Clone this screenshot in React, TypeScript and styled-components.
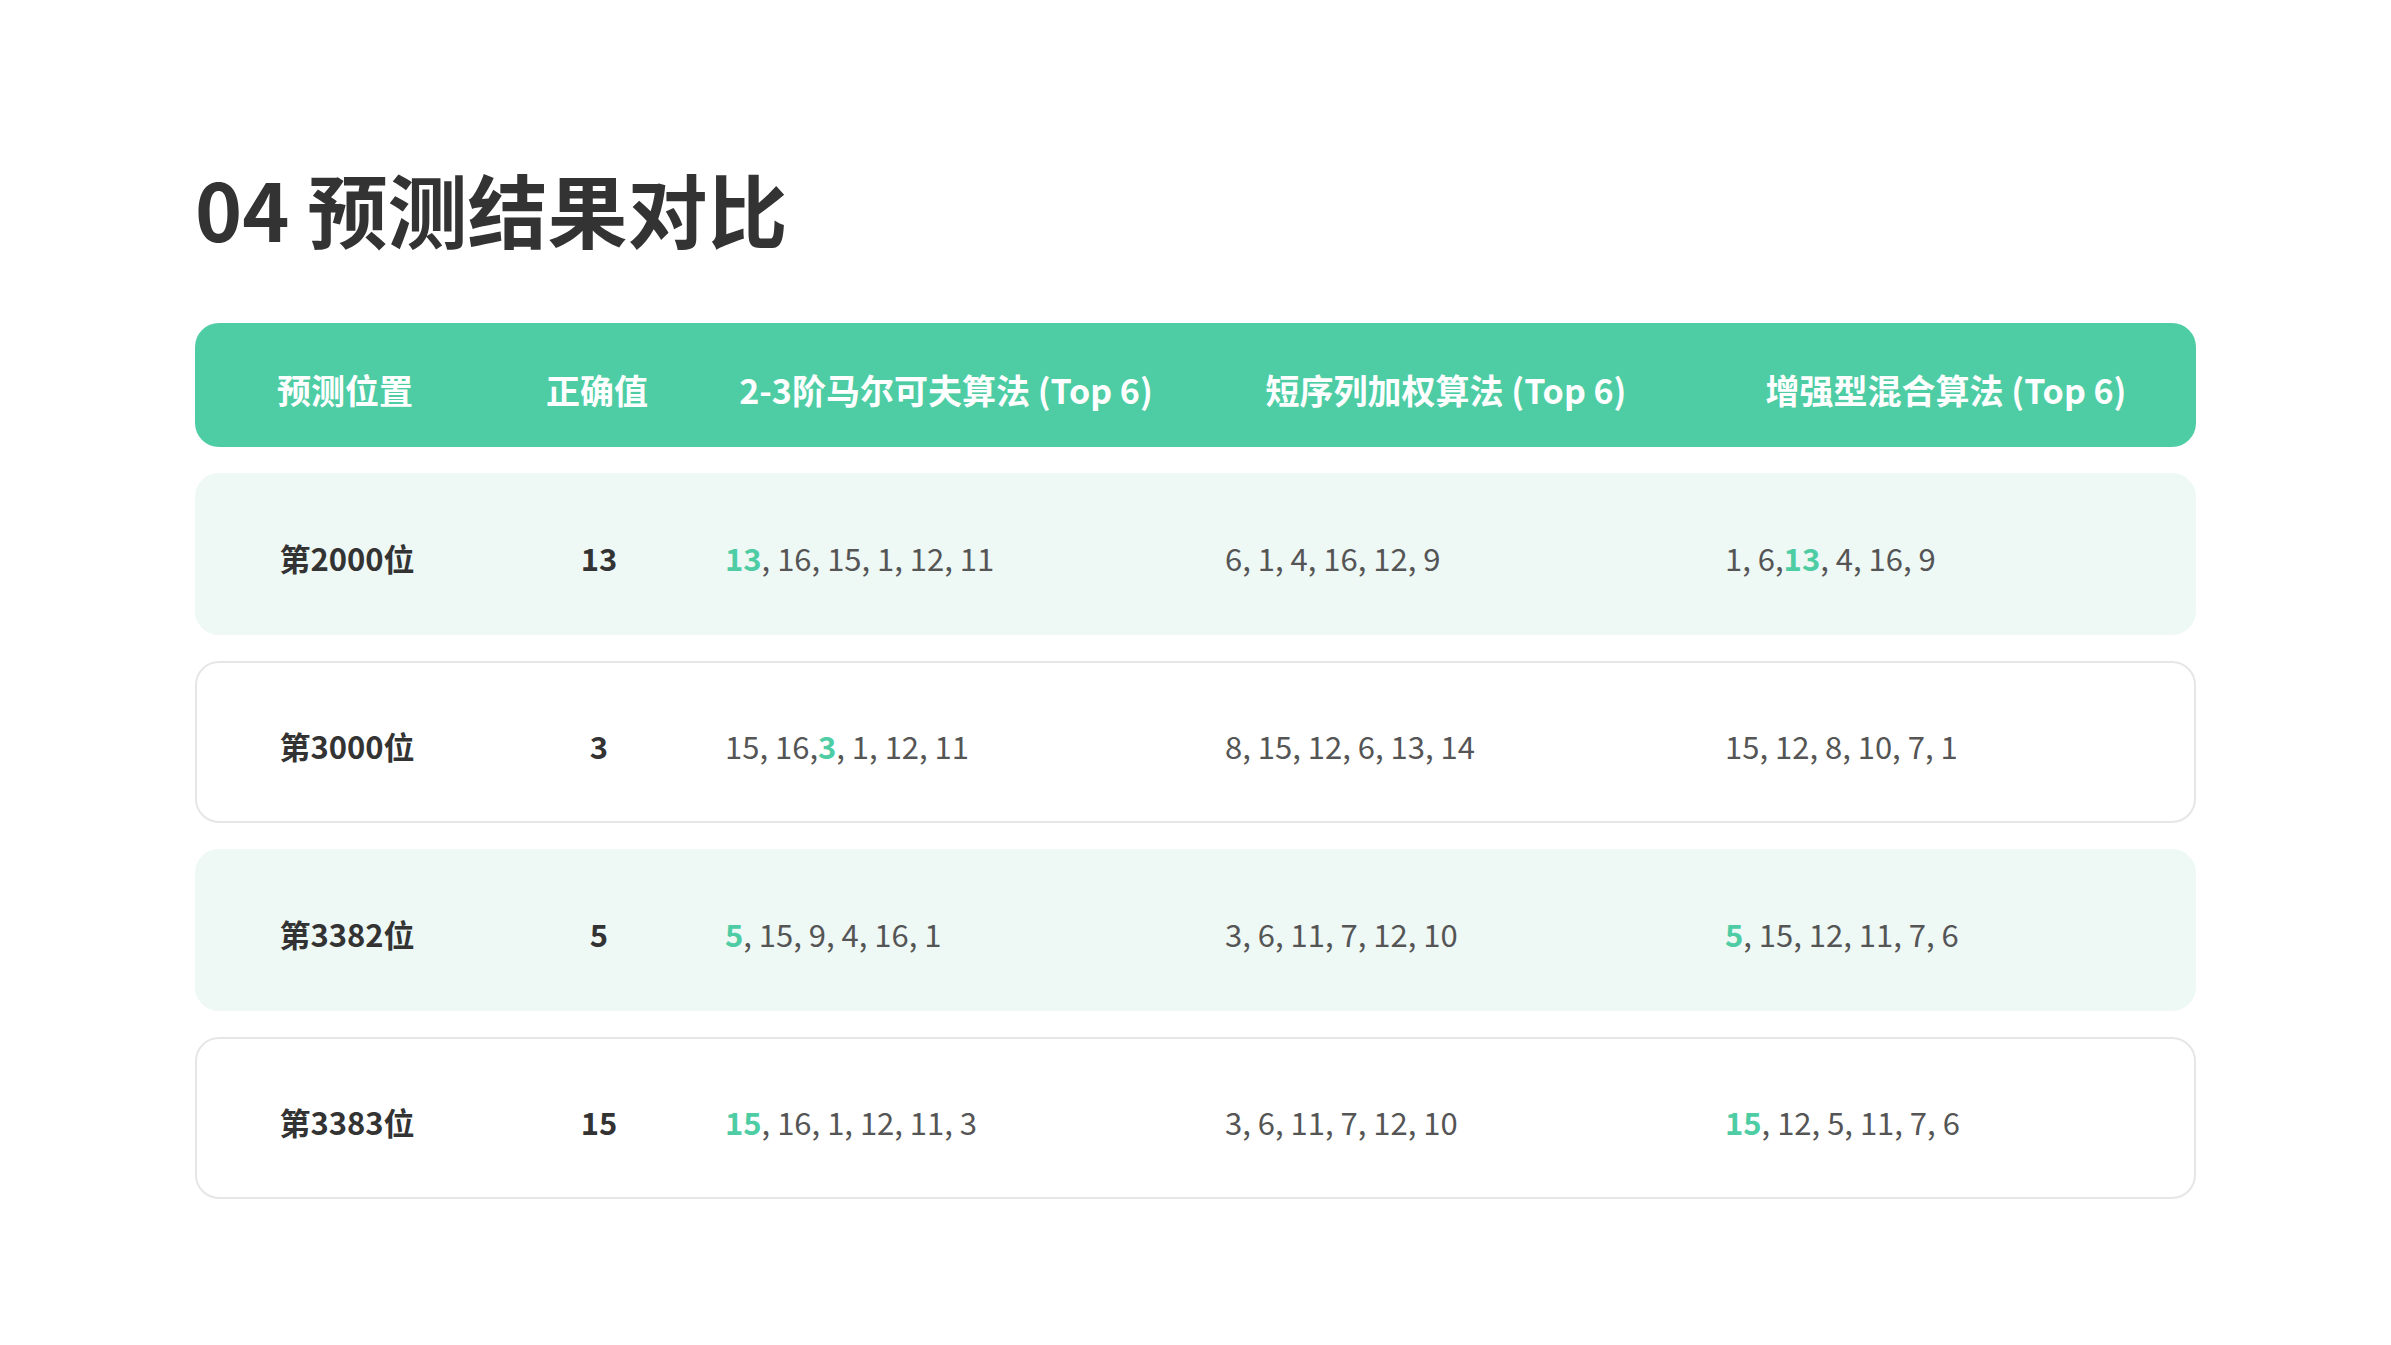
import styled, { createGlobalStyle } from "styled-components";

const GlobalStyle = createGlobalStyle`
  html, body {
    margin: 0;
    padding: 0;
    background: #ffffff;
  }
  body {
    font-family: "Noto Sans CJK SC", "Noto Sans", sans-serif;
    color: #333333;
  }
`;

type Cell = { text: string; hit?: boolean };

const rows: { pos: string; answer: string; markov: Cell[]; short: Cell[]; mixed: Cell[] }[] = [
  {
    pos: "第2000位",
    answer: "13",
    markov: [{ text: "13", hit: true }, { text: ", 16, 15, 1, 12, 11" }],
    short: [{ text: "6, 1, 4, 16, 12, 9" }],
    mixed: [{ text: "1, 6," }, { text: "13", hit: true }, { text: ", 4, 16, 9" }],
  },
  {
    pos: "第3000位",
    answer: "3",
    markov: [{ text: "15, 16," }, { text: "3", hit: true }, { text: ", 1, 12, 11" }],
    short: [{ text: "8, 15, 12, 6, 13, 14" }],
    mixed: [{ text: "15, 12, 8, 10, 7, 1" }],
  },
  {
    pos: "第3382位",
    answer: "5",
    markov: [{ text: "5", hit: true }, { text: ", 15, 9, 4, 16, 1" }],
    short: [{ text: "3, 6, 11, 7, 12, 10" }],
    mixed: [{ text: "5", hit: true }, { text: ", 15, 12, 11, 7, 6" }],
  },
  {
    pos: "第3383位",
    answer: "15",
    markov: [{ text: "15", hit: true }, { text: ", 16, 1, 12, 11, 3" }],
    short: [{ text: "3, 6, 11, 7, 12, 10" }],
    mixed: [{ text: "15", hit: true }, { text: ", 12, 5, 11, 7, 6" }],
  },
];

const headers = [
  "预测位置",
  "正确值",
  "2-3阶马尔可夫算法 (Top 6)",
  "短序列加权算法 (Top 6)",
  "增强型混合算法 (Top 6)",
];

const Page = styled.div`
  width: 2391px;
  height: 1345px;
  box-sizing: border-box;
  padding: 167px 195px 0;
`;

const Title = styled.h1`
  margin: 0 0 76px;
  font-size: 80px;
  line-height: 80px;
  font-weight: 700;
  color: #333333;
  letter-spacing: 0;
`;

const Table = styled.div`
  display: flex;
  flex-direction: column;
  gap: 26px;
`;

const grid = `
  display: grid;
  grid-template-columns: 252px 144px 446px 446px 446px;
  column-gap: 54px;
  padding: 0 26px 0 24px;
  align-items: center;
  box-sizing: border-box;
`;

const HeaderRow = styled.div`
  ${grid}
  height: 124px;
  background: #4ecda4;
  border-radius: 24px;
`;

const HeaderCell = styled.div`
  text-align: center;
  font-size: 34px;
  font-weight: 700;
  color: #ffffff;
  white-space: nowrap;
  padding-top: 8px;
`;

const Row = styled.div<{ $shaded: boolean }>`
  ${grid}
  height: 162px;
  border-radius: 24px;
  background: ${(p) => (p.$shaded ? "#eef8f5" : "#ffffff")};
  border: 2px solid ${(p) => (p.$shaded ? "#eef8f5" : "#e6e6e6")};
`;

const Label = styled.div`
  text-align: center;
  font-size: 31px;
  font-weight: 700;
  color: #333333;
  padding-top: 6px;
`;

const Values = styled.div`
  font-size: 31px;
  font-weight: 400;
  color: #555555;
  white-space: nowrap;
  padding-top: 6px;
`;

const Hit = styled.span`
  color: #4ecda4;
  font-weight: 700;
`;

const renderCells = (cells: Cell[]) =>
  cells.map((c, i) => (c.hit ? <Hit key={i}>{c.text}</Hit> : <span key={i}>{c.text}</span>));

export default function App() {
  return (
    <>
      <GlobalStyle />
      <Page>
        <Title>04 预测结果对比</Title>
        <Table>
          <HeaderRow>
            {headers.map((h) => (
              <HeaderCell key={h}>{h}</HeaderCell>
            ))}
          </HeaderRow>
          {rows.map((r, i) => (
            <Row key={r.pos} $shaded={i % 2 === 0}>
              <Label>{r.pos}</Label>
              <Label>{r.answer}</Label>
              <Values>{renderCells(r.markov)}</Values>
              <Values>{renderCells(r.short)}</Values>
              <Values>{renderCells(r.mixed)}</Values>
            </Row>
          ))}
        </Table>
      </Page>
    </>
  );
}
